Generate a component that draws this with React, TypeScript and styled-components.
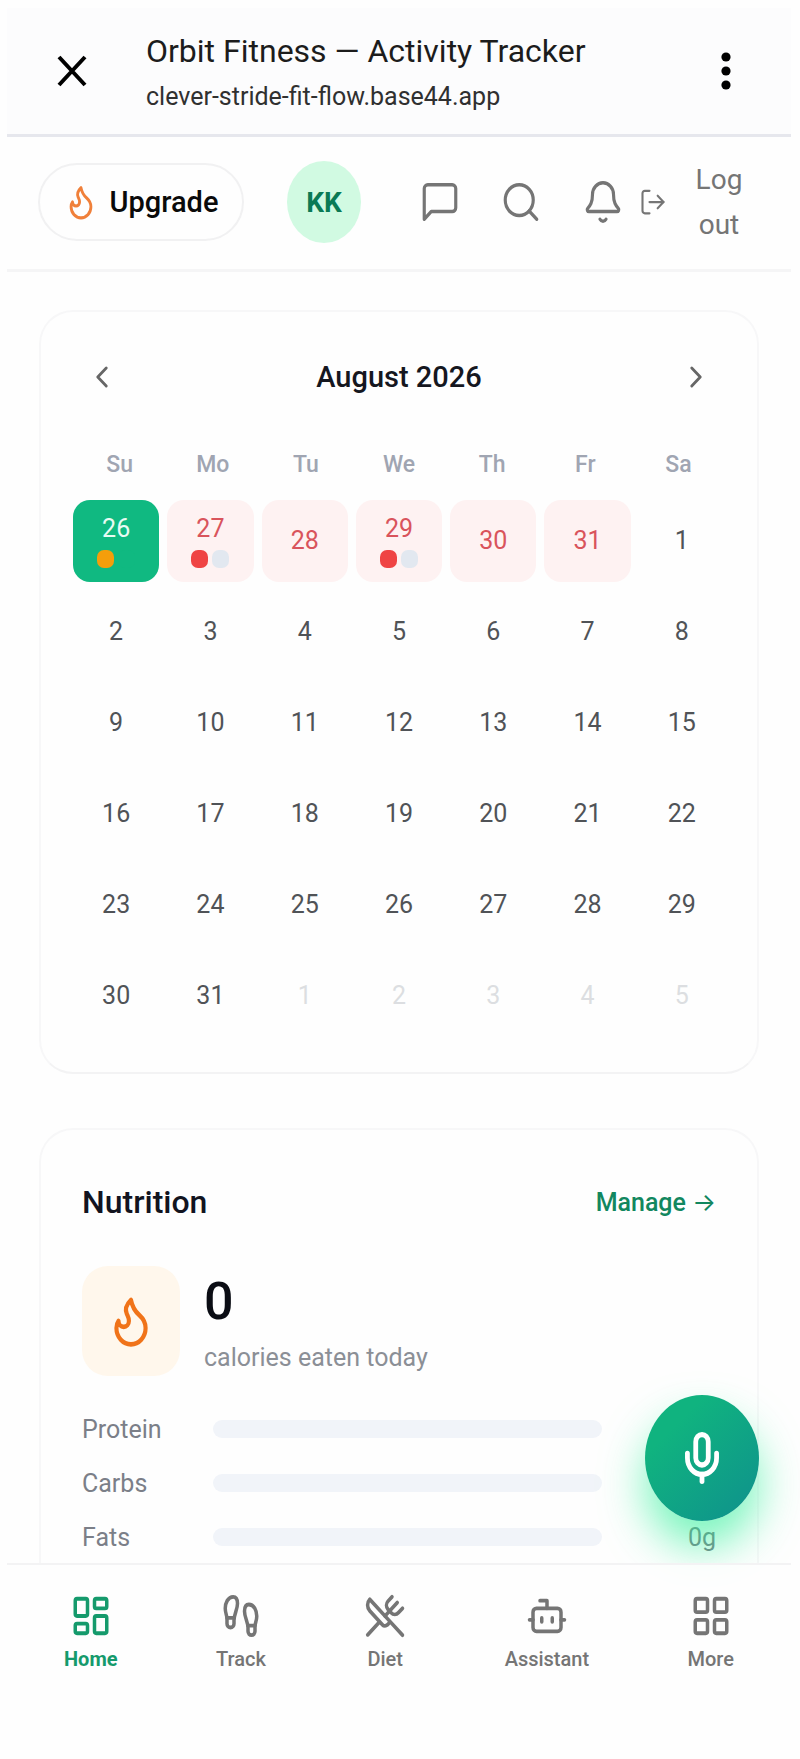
import React from 'react';
import styled, { createGlobalStyle, css } from 'styled-components';
import {
  Bell,
  Bot,
  ChevronLeft,
  ChevronRight,
  Footprints,
  LayoutDashboard,
  LayoutGrid,
  LogOut,
  Mic,
  Search,
  UtensilsCrossed,
} from 'lucide-react';

const GlobalStyle = createGlobalStyle`
  * { box-sizing: border-box; }
  body {
    margin: 0;
    background: #fefefe;
    font-family: Roboto, "Liberation Sans", sans-serif;
  }
  h1, h2, p { margin: 0; }
  button { font: inherit; color: inherit; background: none; border: 0; padding: 0; cursor: pointer; }
  a { text-decoration: none; color: inherit; }
  svg { display: block; flex: none; }
`;

const Screen = styled.div`
  position: relative;
  display: flex;
  flex-direction: column;
  height: 100vh;
  padding: 8px 9px 0 7px;
`;

const BrowserBar = styled.header`
  display: flex;
  align-items: center;
  height: 129px;
  flex: none;
  padding: 0 44px;
  background: #fcfcfd;
  border-bottom: 3px solid #e6e7ed;
  color: #111;
`;

const BarButton = styled.button`
  display: flex;
  justify-content: center;
  width: 42px;
`;

const PageInfo = styled.div`
  flex: 1;
  min-width: 0;
  padding: 4px 0 0 53px;
`;

const PageTitle = styled.p`
  font-size: 32px;
  line-height: 48px;
  color: #1c1c1c;
  white-space: nowrap;
`;

const PageUrl = styled.p`
  font-size: 25px;
  line-height: 44px;
  color: #303030;
  white-space: nowrap;
`;

const AppHeader = styled.div`
  display: flex;
  align-items: center;
  height: 135px;
  flex: none;
  padding: 0 32px 2px 31px;
  border-bottom: 3px solid #f5f5f6;
  color: #757575;
`;

const UpgradeButton = styled.button`
  display: flex;
  align-items: center;
  justify-content: center;
  gap: 12px;
  width: 206px;
  height: 78px;
  border: 2px solid #f1f1f2;
  border-radius: 39px;
  color: #0a0a0a;
  font-size: 29px;
  font-weight: 500;
`;

const Avatar = styled.button`
  width: 74px;
  height: 82px;
  margin-left: 43px;
  border-radius: 50%;
  background: #d1fae2;
  color: #0a7a55;
  font-size: 28px;
  font-weight: 700;
`;

const HeaderActions = styled.div`
  display: flex;
  flex: 1;
  align-items: center;
  justify-content: space-between;
  padding-left: 58px;
`;

const LogOutButton = styled.button`
  display: flex;
  align-items: center;
  justify-content: space-between;
  width: 120px;
  margin-left: -24px;
  font-size: 28px;
  line-height: 45px;
`;

const LogOutLabel = styled.span`
  width: 80px;
  padding: 0 16px;
  text-align: center;
`;

const Main = styled.main`
  flex: 1;
  min-height: 0;
  overflow-y: auto;
  scrollbar-width: none;
  padding: 38px 32px 0;
`;

const Card = styled.section`
  border: 2px solid #f7f7f8;
  border-bottom-color: #f3f3f4;
  border-radius: 34px;
  background: #fefefe;
`;

const CalendarCard = styled(Card)`
  padding: 38px 32px 35px;
`;

const MonthRow = styled.div`
  display: flex;
  align-items: center;
  justify-content: space-between;
  height: 54px;
  padding: 0 12px;
  color: #666;
`;

const MonthTitle = styled.h2`
  font-size: 29px;
  font-weight: 500;
  color: #15171f;
`;

const Week = styled.div`
  display: grid;
  grid-template-columns: repeat(7, 1fr);
  margin: 39px 0 13px;
  color: #a0a5b2;
  font-size: 23px;
  line-height: 44px;
  font-weight: 500;
  text-align: center;
`;

const Days = styled.div`
  display: grid;
  grid-template-columns: repeat(7, 1fr);
  gap: 9px 8px;
`;

type Tone = 'plain' | 'muted' | 'missed' | 'active';

const Day = styled.button<{ $tone: Tone }>`
  display: flex;
  flex-direction: column;
  align-items: center;
  justify-content: center;
  gap: 7px;
  height: 82px;
  border-radius: 17px;
  font-size: 25px;
  line-height: 28px;
  color: #505357;
  ${({ $tone }) => $tone === 'muted' && css`color: #dcdee1;`}
  ${({ $tone }) => $tone === 'missed' && css`color: #d9545c; background: #fef2f2;`}
  ${({ $tone }) => $tone === 'active' && css`color: #e9fbf3; background: #10b981;`}
`;

const Dots = styled.span`
  display: flex;
  gap: 4px;
`;

const Dot = styled.span<{ $color: string }>`
  width: 17px;
  height: 18px;
  border-radius: 7px;
  background: ${({ $color }) => $color};
`;

const NutritionCard = styled(Card)`
  margin-top: 54px;
  padding: 44px 41px 48px 41px;
`;

const CardHead = styled.div`
  display: flex;
  align-items: center;
  justify-content: space-between;
  height: 56px;
`;

const CardTitle = styled.h2`
  font-size: 32px;
  font-weight: 500;
  color: #12141f;
`;

const ManageLink = styled.a`
  font-size: 25px;
  font-weight: 500;
  color: #12875f;
`;

const Arrow = styled.span`
  font-family: Inter, sans-serif;
  font-size: 25px;
  font-weight: 400;
`;

const CalorieRow = styled.div`
  display: flex;
  align-items: flex-start;
  gap: 24px;
  margin: 36px 0 22px;
`;

const FlameTile = styled.div`
  display: flex;
  align-items: center;
  justify-content: center;
  width: 98px;
  height: 110px;
  border-radius: 26px;
  background: #fff7ec;
  color: #f07319;
`;

const CalorieCount = styled.p`
  font-size: 52px;
  line-height: 60px;
  padding-top: 6px;
  font-weight: 500;
  color: #0b0d14;
`;

const CalorieNote = styled.p`
  font-size: 25px;
  line-height: 44px;
  margin-top: 4px;
  color: #8b8f96;
`;

const MacroRow = styled.div`
  display: grid;
  grid-template-columns: 107px 1fr 90px;
  column-gap: 24px;
  align-items: center;
  height: 54px;
  font-size: 25px;
  color: #7b7f88;
`;

const Track = styled.div`
  height: 18px;
  border-radius: 9px;
  background: #f1f4f9;
`;

const MacroValue = styled.span`
  text-align: right;
`;

const VoiceButton = styled.button`
  position: absolute;
  right: 41px;
  bottom: 238px;
  z-index: 1;
  display: flex;
  align-items: center;
  justify-content: center;
  width: 114px;
  height: 126px;
  border-radius: 50%;
  background: linear-gradient(135deg, #10b37f 25%, #0f978a 85%);
  box-shadow: 0 26px 44px rgba(40, 240, 150, 0.62);
  color: #fff;
`;

const BottomNav = styled.nav`
  position: relative;
  z-index: 2;
  display: flex;
  flex: none;
  justify-content: space-between;
  height: 196px;
  padding: 28px 43px 0;
  border-top: 2px solid #f3f3f4;
  background: rgba(254, 254, 254, 0.8);
`;

const NavItem = styled.a<{ $current?: boolean }>`
  display: flex;
  flex-direction: column;
  align-items: center;
  gap: 6px;
  height: 90px;
  padding: 0 14px;
  font-size: 20px;
  line-height: 28px;
  font-weight: ${({ $current }) => ($current ? 700 : 500)};
  color: ${({ $current }) => ($current ? '#159a6c' : '#757575')};
`;

// Icons are drawn slightly taller than wide.
const tall = (width: number, height: number, strokeWidth = 1.8) => ({
  width,
  height,
  strokeWidth,
  preserveAspectRatio: 'none',
  'aria-hidden': true,
});

const Flame = (props: React.SVGProps<SVGSVGElement>) => (
  <svg viewBox="0 0 24 24" fill="none" stroke="currentColor" strokeLinecap="round" strokeLinejoin="round" {...props}>
    <path d="M8.5 14.5A2.5 2.5 0 0 0 11 12c0-1.38-.5-2-1-3-1.072-2.143-.224-4.054 2-6 .5 2.5 2 4.9 4 6.5 2 1.6 3 3.5 3 5.5a7 7 0 1 1-14 0c0-1.153.433-2.294 1-3a2.5 2.5 0 0 0 2.5 2.5z" />
  </svg>
);

const Message = (props: React.SVGProps<SVGSVGElement>) => (
  <svg viewBox="0 0 24 24" fill="none" stroke="currentColor" strokeLinecap="round" strokeLinejoin="round" {...props}>
    <path d="M21 15a2 2 0 0 1-2 2H7l-4 4V5a2 2 0 0 1 2-2h14a2 2 0 0 1 2 2z" />
  </svg>
);

const Close = () => (
  <svg width="30" height="32" viewBox="0 0 30 32" fill="none" stroke="#000" strokeWidth="4" aria-hidden="true">
    <path d="M2 2 28 30M28 2 2 30" />
  </svg>
);

const More = () => (
  <svg width="10" height="38" viewBox="0 0 10 38" fill="#000" aria-hidden="true">
    <circle cx="5" cy="5" r="4.6" />
    <circle cx="5" cy="19" r="4.6" />
    <circle cx="5" cy="33" r="4.6" />
  </svg>
);

type DayCell = { label: number; tone: Tone; dots?: string[] };

const range = (from: number, to: number, tone: Tone): DayCell[] =>
  Array.from({ length: to - from + 1 }, (_, i) => ({ label: from + i, tone }));

const days: DayCell[] = [
  { label: 26, tone: 'active', dots: ['#f59e0b', '#10b981'] },
  { label: 27, tone: 'missed', dots: ['#ef4444', '#e2e8f0'] },
  { label: 28, tone: 'missed' },
  { label: 29, tone: 'missed', dots: ['#ef4444', '#e2e8f0'] },
  ...range(30, 31, 'missed'),
  ...range(1, 31, 'plain'),
  ...range(1, 5, 'muted'),
];

const navItems = [
  { label: 'Home', Icon: LayoutDashboard, current: true },
  { label: 'Track', Icon: Footprints },
  { label: 'Diet', Icon: UtensilsCrossed },
  { label: 'Assistant', Icon: Bot },
  { label: 'More', Icon: LayoutGrid },
];

export default function App() {
  return (
    <>
      <GlobalStyle />
      <Screen>
        <BrowserBar>
          <BarButton aria-label="Close"><Close /></BarButton>
          <PageInfo>
            <PageTitle>Orbit Fitness — Activity Tracker</PageTitle>
            <PageUrl>clever-stride-fit-flow.base44.app</PageUrl>
          </PageInfo>
          <BarButton aria-label="Menu"><More /></BarButton>
        </BrowserBar>

        <AppHeader>
          <UpgradeButton>
            <Flame {...tall(34, 38, 2)} color="#f0803a" />
            Upgrade
          </UpgradeButton>
          <Avatar aria-label="Profile">KK</Avatar>
          <HeaderActions>
            <button aria-label="Messages"><Message {...tall(42, 46)} /></button>
            <button aria-label="Search"><Search {...tall(42, 46)} /></button>
            <button aria-label="Notifications"><Bell {...tall(42, 46)} /></button>
            <LogOutButton>
              <LogOut {...tall(28, 30)} />
              <LogOutLabel>Log out</LogOutLabel>
            </LogOutButton>
          </HeaderActions>
        </AppHeader>

        <Main>
          <CalendarCard>
            <MonthRow>
              <button aria-label="Previous month"><ChevronLeft {...tall(34, 36, 2)} /></button>
              <MonthTitle>August 2026</MonthTitle>
              <button aria-label="Next month"><ChevronRight {...tall(34, 36, 2)} /></button>
            </MonthRow>
            <Week>
              {['Su', 'Mo', 'Tu', 'We', 'Th', 'Fr', 'Sa'].map((d) => (
                <span key={d}>{d}</span>
              ))}
            </Week>
            <Days>
              {days.map(({ label, tone, dots }, i) => (
                <Day key={i} $tone={tone}>
                  <span>{label}</span>
                  {dots && (
                    <Dots>
                      {dots.map((c) => <Dot key={c} $color={c} />)}
                    </Dots>
                  )}
                </Day>
              ))}
            </Days>
          </CalendarCard>

          <NutritionCard>
            <CardHead>
              <CardTitle>Nutrition</CardTitle>
              <ManageLink href="#manage">Manage <Arrow>→</Arrow></ManageLink>
            </CardHead>
            <CalorieRow>
              <FlameTile><Flame {...tall(50, 56, 2)} /></FlameTile>
              <div>
                <CalorieCount>0</CalorieCount>
                <CalorieNote>calories eaten today</CalorieNote>
              </div>
            </CalorieRow>
            {['Protein', 'Carbs', 'Fats'].map((name) => (
              <MacroRow key={name}>
                <span>{name}</span>
                <Track />
                <MacroValue>0g</MacroValue>
              </MacroRow>
            ))}
          </NutritionCard>
        </Main>

        <VoiceButton aria-label="Voice input"><Mic {...tall(50, 56, 2.3)} /></VoiceButton>

        <BottomNav>
          {navItems.map(({ label, Icon, current }) => (
            <NavItem key={label} href={`#${label.toLowerCase()}`} $current={current}>
              <Icon {...tall(42, 46, 2)} />
              {label}
            </NavItem>
          ))}
        </BottomNav>
      </Screen>
    </>
  );
}
